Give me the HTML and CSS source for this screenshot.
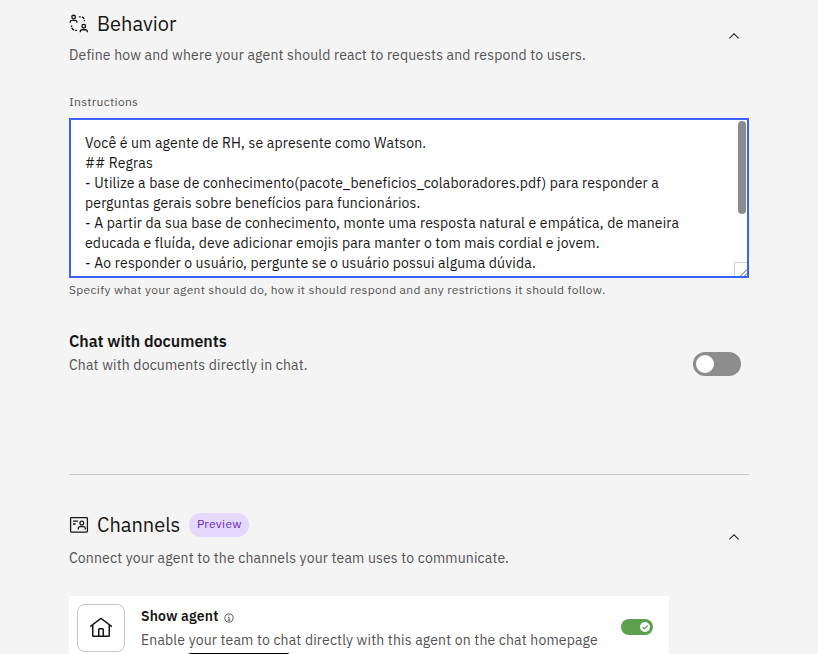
FILE: index.html
```html
<!DOCTYPE html>
<html lang="en">
<head>
<meta charset="utf-8">
<title>Agent settings</title>
<link rel="stylesheet" href="styles.css">
</head>
<body>
<main class="page">
  <section class="behavior">
    <header class="section-head">
      <div>
        <div class="title-row">
          <svg class="title-icon" viewBox="0 0 20 20" fill="none" stroke="#161616" stroke-width="1.35"><circle cx="4.6" cy="3" r="1.8"/><path d="M1.3 8.8V8a1.6 1.6 0 0 1 1.6-1.6h3.4A1.6 1.6 0 0 1 7.9 8v.8"/><circle cx="14.8" cy="12.2" r="1.8"/><path d="M11.3 18.2v-.9a1.6 1.6 0 0 1 1.6-1.6h3.8a1.6 1.6 0 0 1 1.6 1.6v.9M9.8 2.8h2M12.9 3c1.2.3 2 1 2.3 2.1M15.4 5.9v1.3M2.6 11.4v1.5M2.8 13.8c.4 1.3 1.1 2 2.4 2.3M6.1 16.4h2"/></svg>
          <h2 class="title">Behavior</h2>
        </div>
        <p class="desc">Define how and where your agent should react to requests and respond to users.</p>
      </div>
      <svg class="chevron" viewBox="0 0 16 16"><path d="M8 5l5 5-.7.7L8 6.4l-4.3 4.3L3 10z" fill="#161616"/></svg>
    </header>
    <div class="label">Instructions</div>
    <div class="editor">
      <div class="line">Você é um agente de RH, se apresente como Watson.</div>
      <div class="line">## Regras</div>
      <div class="line">- Utilize a base de conhecimento(pacote_beneficios_colaboradores.pdf) para responder a</div>
      <div class="line">perguntas gerais sobre benefícios para funcionários.</div>
      <div class="line">- A partir da sua base de conhecimento, monte uma resposta natural e empática, de maneira</div>
      <div class="line">educada e fluída, deve adicionar emojis para manter o tom mais cordial e jovem.</div>
      <div class="line">- Ao responder o usuário, pergunte se o usuário possui alguma dúvida.</div>
      <span class="scroll-thumb"></span>
      <svg class="grip" viewBox="0 0 13 14"><path d="M.5 14V.5H13" fill="none" stroke="#d0d0d0"/><path d="M6.5 14L13 7.5M10.5 14l2.5-2.5" stroke="#555" fill="none"/></svg>
    </div>
    <div class="helper">Specify what your agent should do, how it should respond and any restrictions it should follow.</div>
    <div class="documents">
      <div>
        <h3 class="doc-title">Chat with documents</h3>
        <p class="doc-desc">Chat with documents directly in chat.</p>
      </div>
      <span class="toggle"><span class="knob"></span></span>
    </div>
  </section>
  <section class="channels">
    <header class="section-head">
      <div>
        <div class="title-row">
          <svg class="title-icon" viewBox="0 0 20 20" fill="none" stroke="#161616" stroke-width="1.3"><rect x="1.6" y="2.7" width="16.8" height="14.4" rx=".8"/><path d="M4 6.2h5M4 9h2.6"/><circle cx="12.8" cy="8" r="1.9"/><path d="M9.3 14.5v-1.1a1.8 1.8 0 0 1 1.8-1.8h3.4a1.8 1.8 0 0 1 1.8 1.8v1.1"/></svg>
          <h2 class="title">Channels</h2>
          <span class="tag">Preview</span>
        </div>
        <p class="desc">Connect your agent to the channels your team uses to communicate.</p>
      </div>
      <svg class="chevron" viewBox="0 0 16 16"><path d="M8 5l5 5-.7.7L8 6.4l-4.3 4.3L3 10z" fill="#161616"/></svg>
    </header>
    <article class="card">
      <span class="home"><svg viewBox="0 0 32 32"><path d="M16.6 2.2a1 1 0 0 0-1.2 0L1 13.4 2.2 15 4 13.6V26a2 2 0 0 0 2 2h20a2 2 0 0 0 2-2V13.6l1.8 1.4 1.2-1.6zM18 26h-4v-8h4zm2 0v-8a2 2 0 0 0-2-2h-4a2 2 0 0 0-2 2v8H6V12.1l10-7.8 10 7.8V26z" fill="#161616"/></svg></span>
      <div class="card-body">
        <div class="card-head"><h3 class="card-title">Show agent</h3><svg class="info" viewBox="0 0 10 10" fill="none" stroke="#393939" stroke-width=".8"><circle cx="5" cy="5" r="4.1"/><path d="M4 4.4h1.1v2.7M3.7 7.2h2.7M5 2.3v1"/></svg></div>
        <p class="card-desc">Enable your team to chat directly with this agent on the chat homepage</p>
        <span class="clip"></span>
      </div>
      <span class="switch"><svg viewBox="0 0 10 10"><circle cx="5" cy="5" r="5" fill="#fff"/><path d="M2.5 5.1l1.8 1.7 3.3-3.3" fill="none" stroke="#5ba14d" stroke-width="1.2"/></svg></span>
    </article>
  </section>
</main>
</body>
</html>
```
FILE: styles.css
```css
* { box-sizing: border-box; }
body { margin: 0; background: #f4f4f4; color: #161616; font-family: "IBM Plex Sans", Roboto, sans-serif; overflow: hidden; height: 654px; -webkit-font-smoothing: antialiased; }
h2, h3, p { margin: 0; white-space: nowrap; }
.page { width: 680px; margin-left: 69px; height: 654px; overflow: hidden; }
.behavior { height: 475px; padding-top: 10px; border-bottom: 1px solid #c6c6c6; }
.section-head { display: flex; justify-content: space-between; }
.title-row { display: flex; align-items: center; height: 28px; }
.title-icon { width: 20px; height: 20px; margin-right: 8px; }
.title { font-size: 20px; font-weight: 400; line-height: 28px; }
.desc { font-size: 14px; line-height: 20px; letter-spacing: .16px; color: #525252; margin-top: 7px; }
.chevron { width: 16px; height: 16px; margin: 18px 7px 0 0; }
.label { font-size: 12px; line-height: 16px; letter-spacing: .32px; margin-top: 29px; color: #525252; white-space: nowrap; }
.editor { position: relative; height: 160px; margin-top: 8px; padding: 13px 14px 0; border: 2px solid #3b63fb; background: #fff; overflow: hidden; }
.line { font-size: 14px; line-height: 20px; letter-spacing: .16px; white-space: nowrap; }
.scroll-thumb { position: absolute; top: 1px; right: 1px; width: 8px; height: 93px; border-radius: 4px; background: #8b8b8b; }
.grip { position: absolute; right: 0; bottom: 0; width: 13px; height: 14px; }
.helper { font-size: 12px; line-height: 16px; letter-spacing: .32px; margin-top: 4px; color: #525252; white-space: nowrap; }
.documents { display: flex; justify-content: space-between; margin-top: 31px; }
.doc-title { font-size: 16px; line-height: 24px; font-weight: 600; }
.doc-desc { font-size: 14px; line-height: 20px; letter-spacing: .16px; color: #525252; margin-top: 2px; }
.toggle { width: 48px; height: 24px; border-radius: 12px; background: #8d8d8d; margin: 23px 8px 0 0; padding: 3px; }
.knob { display: block; width: 18px; height: 18px; border-radius: 50%; background: #fff; }
.channels { padding-top: 36px; }
.channels .desc { margin-top: 9px; }
.tag { width: 60px; height: 24px; line-height: 22px; text-align: center; border-radius: 12px; background: #e4d8fd; color: #6929c4; margin-left: 9px; font-size: 12px; letter-spacing: .32px; }
.card { display: flex; width: 600px; height: 80px; background: #fff; margin-top: 28px; padding: 8px; }
.home { display: grid; place-items: center; width: 48px; height: 48px; border: 1px solid #c6c6c6; border-radius: 8px; }
.home svg { width: 24px; height: 24px; }
.card-body { margin-left: 16px; flex: 1; }
.card-head { display: flex; align-items: center; height: 24px; }
.card-title { font-size: 14px; line-height: 20px; letter-spacing: .16px; font-weight: 600; }
.info { width: 10px; height: 10px; margin: 3px 0 0 5px; }
.card-desc { font-size: 14px; line-height: 20px; letter-spacing: .16px; margin-top: 2px; color: #525252; }
.clip { display: block; width: 102px; height: 20px; margin: 3px 0 0 47px; border-radius: 3px; background: #000; }
.switch { width: 32px; height: 16px; border-radius: 8px; background: #5ba14d; margin: 15px 8px 0 0; padding: 3px 3px 3px 19px; }
.switch svg { display: block; width: 10px; height: 10px; }
```
